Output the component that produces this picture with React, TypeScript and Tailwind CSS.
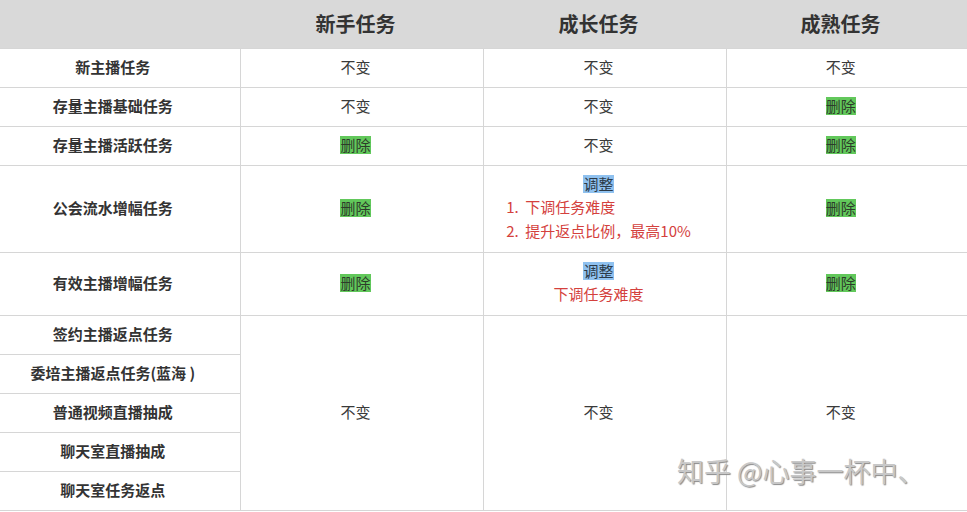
import React from "react";

type Cell = { kind: "plain" | "del" } | { kind: "adjust"; lines: string[]; list?: boolean };

interface Row {
  name: string;
  h: string;
  cells: Cell[];
}

const keep: Cell = { kind: "plain" };
const del: Cell = { kind: "del" };

const rows: Row[] = [
  { name: "新主播任务", h: "h-[39px]", cells: [keep, keep, keep] },
  { name: "存量主播基础任务", h: "h-[39px]", cells: [keep, keep, del] },
  { name: "存量主播活跃任务", h: "h-[39px]", cells: [del, keep, del] },
  {
    name: "公会流水增幅任务",
    h: "h-[87px]",
    cells: [del, { kind: "adjust", lines: ["1.  下调任务难度", "2.  提升返点比例，最高10%"], list: true }, del],
  },
  {
    name: "有效主播增幅任务",
    h: "h-[63px]",
    cells: [del, { kind: "adjust", lines: ["下调任务难度"] }, del],
  },
];

const mergedNames = ["签约主播返点任务", "委培主播返点任务(蓝海 )", "普通视频直播抽成", "聊天室直播抽成", "聊天室任务返点"];

function CellBody({ cell }: { cell: Cell }) {
  if (cell.kind === "plain") return <span className="text-[#3a3a3a]">不变</span>;
  if (cell.kind === "del") return <span className="bg-[#62c85b] text-[#2d3b2a] leading-[18px] inline-block">删除</span>;
  return (
    <div className="flex flex-col items-center">
      <span className="bg-[#8fc1ef] text-[#2b3a48] leading-[18px] inline-block mb-[2px]">调整</span>
      <div className={cell.list ? "text-left" : "text-center"}>
        {cell.lines.map((l) => (
          <div key={l} className="text-[#d4413d] leading-[24px] whitespace-pre">
            {l}
          </div>
        ))}
      </div>
    </div>
  );
}

export default function App() {
  const font = "font-['Noto_Sans_CJK_SC','Noto_Sans',sans-serif]";
  return (
    <div className={`relative w-[967px] h-[512px] bg-white overflow-hidden ${font}`}>
      <table className="w-[967px] border-collapse table-fixed text-[15px]">
        <colgroup>
          <col className="w-[240px]" />
          <col className="w-[243px]" />
          <col className="w-[243px]" />
          <col className="w-[241px]" />
        </colgroup>
        <thead>
          <tr className="h-[48px] bg-[#d9d9d9]">
            <th />
            {["新手任务", "成长任务", "成熟任务"].map((t) => (
              <th key={t} className="text-[20px] font-bold text-[#333] text-center pr-[12px]">
                {t}
              </th>
            ))}
          </tr>
        </thead>
        <tbody>
          {rows.map((r) => (
            <tr key={r.name} className={r.h}>
              <td className="border-t border-r border-[#d6d6d6] text-center font-bold text-[#333] p-0 pr-[14px]">{r.name}</td>
              {r.cells.map((c, i) => (
                <td key={i} className="border-t border-r last:border-r-0 border-[#d6d6d6] text-center p-0 pr-[12px]">
                  <CellBody cell={c} />
                </td>
              ))}
            </tr>
          ))}
          {mergedNames.map((n, i) => (
            <tr key={n} className="h-[39px]">
              <td className="border-t border-r border-b border-[#d6d6d6] text-center font-bold text-[#333] p-0 pr-[14px]">{n}</td>
              {i === 0 &&
                [0, 1, 2].map((k) => (
                  <td key={k} rowSpan={5} className="border-t border-r border-b last:border-r-0 border-[#d6d6d6] text-center p-0 pr-[12px]">
                    <span className="text-[#3a3a3a]">不变</span>
                  </td>
                ))}
            </tr>
          ))}
        </tbody>
      </table>
      <div className="absolute left-[677px] top-[451px] text-[27px] text-[#c8c8c8] [text-shadow:1px_1px_1px_#8a8a8a] whitespace-nowrap">
        知乎 @心事一杯中、
      </div>
    </div>
  );
}
